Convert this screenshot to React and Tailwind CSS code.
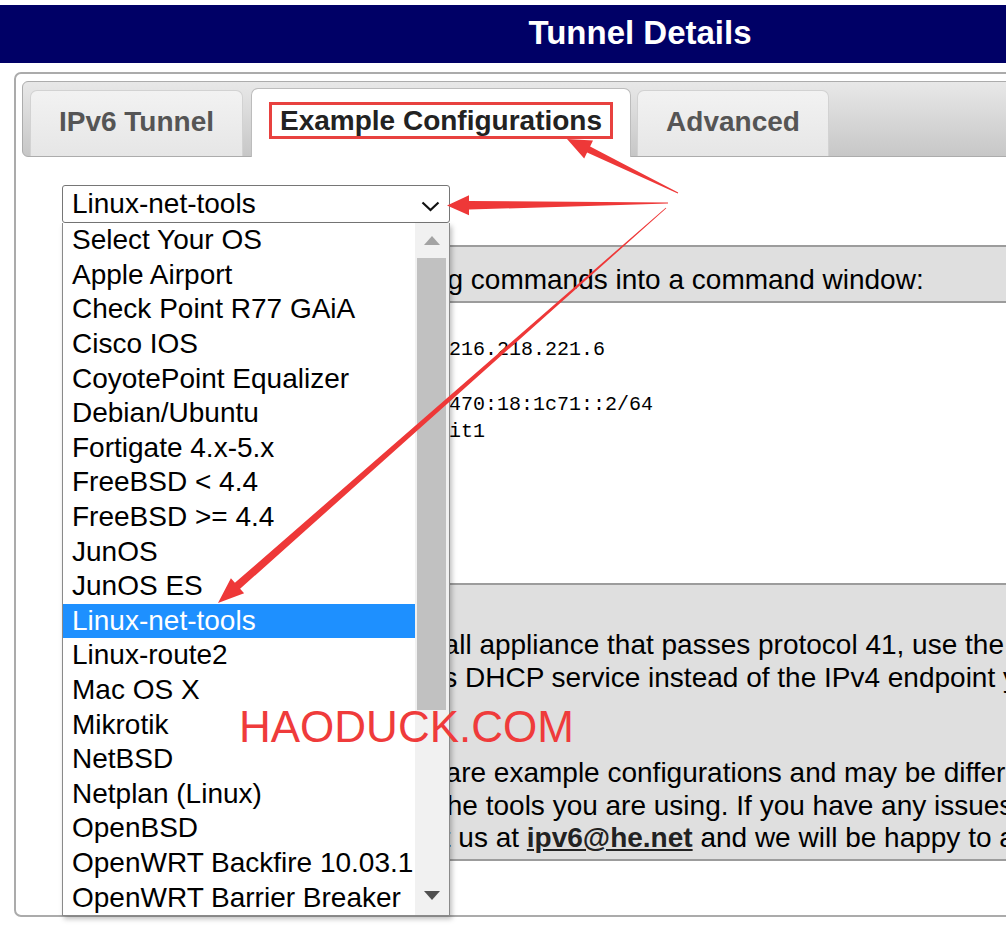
import React from 'react'

const OS_OPTIONS = [
  'Select Your OS',
  'Apple Airport',
  'Check Point R77 GAiA',
  'Cisco IOS',
  'CoyotePoint Equalizer',
  'Debian/Ubuntu',
  'Fortigate 4.x-5.x',
  'FreeBSD < 4.4',
  'FreeBSD >= 4.4',
  'JunOS',
  'JunOS ES',
  'Linux-net-tools',
  'Linux-route2',
  'Mac OS X',
  'Mikrotik',
  'NetBSD',
  'Netplan (Linux)',
  'OpenBSD',
  'OpenWRT Backfire 10.03.1',
  'OpenWRT Barrier Breaker',
]

const SELECTED = 'Linux-net-tools'

const COMMANDS = `ifconfig sit0 up
ifconfig sit0 inet6 tunnel ::216.218.221.6
ifconfig sit1 up
ifconfig sit1 inet6 add 2001:470:18:1c71::2/64
route -A inet6 add ::/0 dev sit1`

function OsSelect() {
  return (
    <div className="relative z-10 w-[388px]">
      <div className="relative flex h-[38px] items-center rounded-[3px] border border-[#767676] bg-white pl-[9px] text-[28px] leading-none text-black">
        {SELECTED}
        <svg className="absolute right-[9px] top-[15px]" width="19" height="11" viewBox="0 0 19 11">
          <polyline points="1.5,1.5 9.5,9 17.5,1.5" fill="none" stroke="#111" strokeWidth="2.2" />
        </svg>
      </div>

      {/* open option list */}
      <div className="absolute left-0 top-full flex h-[693px] w-[388px] border border-t-0 border-[#8a8a8a] bg-white shadow-[2px_3px_5px_rgba(0,0,0,0.25)]">
        <ul className="flex-1">
          {OS_OPTIONS.map((os) => (
            <li
              key={os}
              className={
                os === SELECTED
                  ? 'flex h-[34.6px] items-center bg-[#1e90ff] pl-[9px] text-[28px] leading-none text-white'
                  : 'flex h-[34.6px] items-center pl-[9px] text-[28px] leading-none text-black'
              }
            >
              {os}
            </li>
          ))}
        </ul>
        <div className="flex w-[34px] flex-col bg-[#f1f1f1]">
          <div className="flex h-[35px] items-center justify-center">
            <svg width="16" height="9" viewBox="0 0 16 9">
              <polygon points="0,9 8,0 16,9" fill="#a3a3a3" />
            </svg>
          </div>
          <div className="ml-[2px] mr-[3px] h-[452px] bg-[#c1c1c1]" />
          <div className="flex-1" />
          <div className="flex h-[37px] items-center justify-center pb-[3px]">
            <svg width="16" height="9" viewBox="0 0 16 9">
              <polygon points="0,0 16,0 8,9" fill="#505050" />
            </svg>
          </div>
        </div>
      </div>
    </div>
  )
}

function Tabs() {
  return (
    <div className="flex h-[76px] items-end rounded-[6px] border border-[#acacac] bg-gradient-to-b from-[#e8e8e8] to-[#c7c7c7] pl-[7px]">
      <div className="flex h-[66px] w-[213px] items-center justify-center rounded-t-[7px] border border-b-0 border-[#d2d2d2] bg-gradient-to-b from-[#f2f2f2] to-[#e6e6e6] pb-[4px] text-[28px] font-bold text-[#555]">
        IPv6 Tunnel
      </div>
      <div className="-mb-px ml-[8px] flex h-[69px] w-[380px] items-center justify-center rounded-t-[7px] border border-b-0 border-[#bcbcbc] bg-white pb-[5px]">
        <span className="border-[3px] border-[#e8413f] px-[8px] text-[28px] font-bold leading-[31px] text-[#222]">
          Example Configurations
        </span>
      </div>
      <div className="ml-[6px] flex h-[66px] w-[192px] items-center justify-center rounded-t-[7px] border border-b-0 border-[#d2d2d2] bg-gradient-to-b from-[#f2f2f2] to-[#e6e6e6] pb-[4px] text-[28px] font-bold text-[#555]">
        Advanced
      </div>
    </div>
  )
}

function Arrows() {
  return (
    <svg className="pointer-events-none absolute left-0 top-0 z-30" width="1006" height="930" viewBox="0 0 1006 930">
      <g fill="#ee3838">
        <polygon points="678.2,192.5 590.1,146.4 593,140.5 567,139 584.2,158.5 587.1,152.6 677.8,193.5" />
        <polygon points="668,202.6 469,201 469,195.3 447,205.5 469,215.3 469,209.6 668,203.6" />
        <polygon points="666.3,208.3 240.1,588.8 244.1,593.3 218,603 230.9,578.3 234.9,582.8 665.7,207.7" />
      </g>
    </svg>
  )
}

export default function App() {
  return (
    <div className="relative h-[930px] w-full overflow-hidden bg-white font-['Liberation_Sans',Arial,sans-serif]">
      <div className="w-[1280px] pt-[5px]">
        <header className="flex h-[58px] items-center justify-center bg-[#000066] pb-[2px]">
          <h1 className="text-[33px] font-bold text-white">Tunnel Details</h1>
        </header>

        <div className="mx-[14px] mt-[9px] h-[845px] rounded-[7px] border-2 border-[#ababab] px-[6px] pt-[7px]">
          <Tabs />

          <div className="ml-[40px] mt-[28px]">
            <OsSelect />

            <div className="mt-[22px] w-[1180px]">
              <div className="whitespace-nowrap border-y-2 border-[#9c9c9c] bg-[#dfdfdf] pb-[5px] pl-[166px] pt-[17px] text-[28px] leading-[32px] text-black">
                Paste the following commands into a command window:
              </div>

              <pre className="h-[280px] pl-[39px] pt-[5px] font-['Liberation_Mono',monospace] text-[20px] leading-[27.5px] text-black">
                {COMMANDS}
              </pre>

              <div className="whitespace-nowrap border-y-2 border-[#9c9c9c] bg-[#dfdfdf] pb-[4px] pt-[44px] text-[28px] leading-[32.5px] text-black">
                <p>
                  <span className="block pl-[33px]">
                    NOTE: When behind a firewall appliance that passes protocol 41, use the IPv4 address you get from your
                  </span>
                  <span className="block pl-[256px]">
                    appliance's DHCP service instead of the IPv4 endpoint you provided to our broker.
                  </span>
                </p>
                <p className="mt-[63px]">
                  <span className="block pl-[298px]">
                    These are example configurations and may be different depending on
                  </span>
                  <span className="block pl-[377px]">
                    the tools you are using. If you have any issues with these commands,
                  </span>
                  <span className="block pl-[208px]">
                    please contact us at{' '}
                    <a href="#" className="font-bold text-[#222] underline">ipv6@he.net</a>{' '}
                    and we will be happy to assist.
                  </span>
                </p>
              </div>
            </div>
          </div>
        </div>
      </div>

      {/* watermark */}
      <div className="pointer-events-none absolute left-[239px] top-[705px] z-20 text-[44px] leading-none text-[#ef3b3b]">
        HAODUCK.COM
      </div>

      <Arrows />
    </div>
  )
}
